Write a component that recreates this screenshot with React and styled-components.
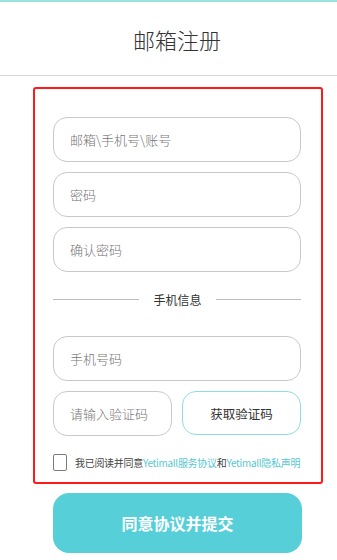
import React from "react";
import styled, { createGlobalStyle } from "styled-components";

const GlobalStyle = createGlobalStyle`
  body {
    margin: 0;
    background: #ffffff;
    font-family: "Noto Sans CJK SC", "Noto Sans", sans-serif;
  }
  * {
    box-sizing: border-box;
  }
`;

const Page = styled.div`
  width: 337px;
  min-height: 560px;
  background: #ffffff;
`;

const TopLine = styled.div`
  height: 2px;
  background-color: #9ae2dc;
`;

const Header = styled.div`
  height: 74px;
  display: flex;
  justify-content: center;
  align-items: center;
  padding-left: 17px;
  border-bottom: 1px solid #d6d6d6;
  color: #333333;
  font-size: 22px;
  font-weight: 300;
`;

const FormBox = styled.div`
  width: 290px;
  margin: 11px 14px 0 33px;
  padding: 28px 20px 10px 18px;
  border: 2px solid #ff1a1a;
  border-radius: 3px;
  display: flex;
  flex-direction: column;
`;

const Field = styled.input`
  width: 100%;
  height: 45px;
  margin-top: ${(p) => p.$top || 0}px;
  padding: 0 16px;
  border: 1px solid #c9c9c9;
  border-radius: 14px;
  font-family: inherit;
  font-size: 13px;
  font-weight: 300;
  color: #333333;
  outline: none;
  background: #ffffff;

  ::placeholder {
    color: #6f6f6f;
  }
`;

const Divider = styled.div`
  height: 20px;
  margin: 17px 0 27px;
  display: flex;
  align-items: center;
  color: #333333;
  font-size: 12px;
`;

const DividerLine = styled.span`
  flex: 1;
  height: 1px;
  background-color: #bdbdbd;
`;

const DividerText = styled.span`
  margin: 0 14px 0 15px;
`;

const CodeRow = styled.div`
  margin-top: 10px;
  display: grid;
  grid-template-columns: 1fr 1fr;
  gap: 10px;
`;

const CodeButton = styled.button`
  height: 44px;
  border: 1px solid #8fdde0;
  border-radius: 14px;
  background: #ffffff;
  color: #333333;
  font-family: inherit;
  font-size: 12.5px;
  cursor: pointer;
`;

const AgreeRow = styled.label`
  margin-top: 17px;
  height: 19px;
  display: flex;
  align-items: center;
  gap: 8px;
  font-size: 10px;
  letter-spacing: -0.3px;
  color: #444444;
  white-space: nowrap;
`;

const CheckBox = styled.span`
  width: 14px;
  height: 17px;
  border: 1.5px solid #7a7a7a;
  border-radius: 2px;
  flex-shrink: 0;
`;

const Link = styled.span`
  color: #57c7d1;
`;

const Submit = styled.button`
  display: block;
  width: 249px;
  height: 60px;
  margin: 9px 0 0 53px;
  border: none;
  border-radius: 16px;
  background-color: #57cfd8;
  color: #ffffff;
  font-family: inherit;
  font-size: 16px;
  font-weight: 700;
  cursor: pointer;
`;

export default function App() {
  return (
    <Page>
      <GlobalStyle />
      <TopLine />
      <Header>邮箱注册</Header>
      <FormBox>
        <Field placeholder="邮箱\手机号\账号" />
        <Field $top={10} type="password" placeholder="密码" />
        <Field $top={10} type="password" placeholder="确认密码" />
        <Divider>
          <DividerLine />
          <DividerText>手机信息</DividerText>
          <DividerLine />
        </Divider>
        <Field placeholder="手机号码" />
        <CodeRow>
          <Field placeholder="请输入验证码" />
          <CodeButton>获取验证码</CodeButton>
        </CodeRow>
        <AgreeRow>
          <CheckBox />
          <span>
            我已阅读并同意<Link>Yetimall服务协议</Link>和
            <Link>Yetimall隐私声明</Link>
          </span>
        </AgreeRow>
      </FormBox>
      <Submit>同意协议并提交</Submit>
    </Page>
  );
}
